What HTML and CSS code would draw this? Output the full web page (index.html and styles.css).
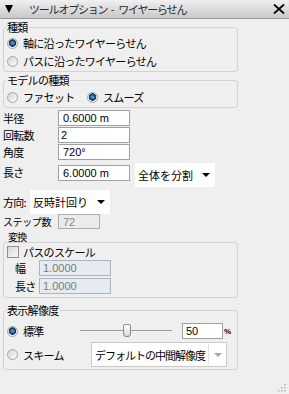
FILE: index.html
```html
<!DOCTYPE html>
<html lang="ja">
<head>
    <meta charset="UTF-8">
    <title>ツールオプション - ワイヤーらせん</title>
    <link rel="stylesheet" href="styles.css">
</head>
<body>
    <div class="panel">
        <div class="titlebar">
            <span class="tri"></span>
            <span class="ttl">ツールオプション<span class="dash"> - </span>ワイヤーらせん</span>
            <svg class="close" width="12" height="10" viewBox="0 0 12 10">
                <path d="M1 0.5 L11 9.5 M11 0.5 L1 9.5" stroke="#000" stroke-width="1.8" fill="none"/>
            </svg>
        </div>
        <div class="content">
            <fieldset class="group">
                <legend>種類</legend>
                <div class="opt"><span class="radio on"></span>軸に沿ったワイヤーらせん</div>
                <div class="opt"><span class="radio"></span>パスに沿ったワイヤーらせん</div>
            </fieldset>
            <fieldset class="group model">
                <legend>モデルの種類</legend>
                <div class="opt-row">
                    <div class="opt w80"><span class="radio"></span>ファセット</div>
                    <div class="opt"><span class="radio on"></span>スムーズ</div>
                </div>
            </fieldset>

            <div class="params">
                <div class="row"><span class="lbl">半径</span><input type="text" class="field" value="0.6000 m"></div>
                <div class="row"><span class="lbl">回転数</span><input type="text" class="field tight" value="2"></div>
                <div class="row"><span class="lbl">角度</span><input type="text" class="field" value="720°"></div>
                <div class="row len">
                    <span class="lbl">長さ</span><input type="text" class="field" value="6.0000 m">
                    <div class="select split">全体を分割<span class="caret"></span></div>
                </div>
                <div class="row dir">
                    <span class="lbl short">方向:</span>
                    <div class="select turn">反時計回り<span class="caret"></span></div>
                </div>
                <div class="row steps">
                    <span class="lbl">ステップ数</span><input type="text" class="field off" value="72" disabled>
                </div>
            </div>

            <div class="sublabel">変換</div>
            <div class="box">
                <div class="check-row"><span class="check"></span>パスのスケール</div>
                <div class="row sub"><span class="lbl2">幅</span><input type="text" class="field dim" value="1.0000" disabled></div>
                <div class="row sub"><span class="lbl2">長さ</span><input type="text" class="field dim" value="1.0000" disabled></div>
            </div>

            <fieldset class="group res">
                <legend>表示解像度</legend>
                <div class="res-row">
                    <div class="opt w71"><span class="radio on"></span>標準</div>
                    <div class="slider">
                        <span class="track"></span>
                        <span class="thumb"></span>
                    </div>
                    <input type="text" class="field pct" value="50">
                    <span class="pct-sign">%</span>
                </div>
                <div class="res-row scheme-row">
                    <div class="opt w84"><span class="radio"></span>スキーム</div>
                    <div class="select scheme">デフォルトの中間解像度<span class="sep"></span><span class="caret grey"></span></div>
                </div>
            </fieldset>
        </div>
        <svg class="grip" width="10" height="10" viewBox="0 0 10 10">
            <rect x="7" y="1" width="1.5" height="1.5" fill="#b5b5b5"/>
            <rect x="4" y="4" width="1.5" height="1.5" fill="#b5b5b5"/>
            <rect x="7" y="4" width="1.5" height="1.5" fill="#b5b5b5"/>
            <rect x="1" y="7" width="1.5" height="1.5" fill="#b5b5b5"/>
            <rect x="4" y="7" width="1.5" height="1.5" fill="#b5b5b5"/>
            <rect x="7" y="7" width="1.5" height="1.5" fill="#b5b5b5"/>
        </svg>
    </div>
</body>
</html>
```

FILE: styles.css
```css
* {
    box-sizing: border-box;
}

body {
    margin: 0;
    background: #efefef;
    font: 11px/14px "Noto Sans CJK JP", sans-serif;
    letter-spacing: -0.7px;
    color: #000;
}

.panel {
    position: relative;
    width: 289px;
    height: 394px;
    background: #efefef;
}

.titlebar {
    display: flex;
    align-items: center;
    height: 19px;
    padding-left: 5px;
    background: linear-gradient(#f0f0f0, #c8c8c8);
    border-bottom: 1px solid #9a9a9a;
}

.tri {
    width: 0;
    height: 0;
    border-left: 4.5px solid transparent;
    border-right: 4.5px solid transparent;
    border-top: 8px solid #000;
}

.ttl {
    margin-left: 16px;
    color: #2a2a2a;
    letter-spacing: -1.2px;
    white-space: pre;
}

.ttl .dash {
    letter-spacing: 0;
    padding: 0 1px;
}

.close {
    margin-left: auto;
    margin-right: 4px;
}

.content {
    width: 241px;
    padding: 0 3px;
}

.group {
    margin: 1px 0 0;
    padding: 0 3px 1px;
    border: 1px solid #d3d3d3;
    border-radius: 3px;
}

.group legend {
    padding: 0 1px;
    margin-left: -1px;
    line-height: 14px;
}

.model .opt-row {
    display: flex;
    margin-top: 1px;
}

.opt {
    display: flex;
    align-items: center;
    height: 18px;
}

.w80 { width: 80px; }
.w71 { width: 71px; }
.w84 { width: 84px; }

.radio {
    flex: none;
    width: 11px;
    height: 11px;
    margin-right: 5px;
    border: 1px solid #a5a5a5;
    border-radius: 50%;
    background: linear-gradient(135deg, #d4d4d4, #fcfcfc);
}

.radio.on {
    background: radial-gradient(circle at 50% 45%, #8cbbe2 0, #2f6ea5 1.5px, #0d3556 3.5px, #dfe3e6 4px, #fff 5px);
}

/* text rows */
.params {
    margin-top: 2px;
}

.row {
    display: flex;
    align-items: center;
}

.row + .row {
    margin-top: 1px;
}

.lbl {
    width: 55px;
    flex: none;
}

.lbl.short {
    width: 27px;
}

.field {
    width: 72px;
    height: 16px;
    margin: 0;
    padding: 0 4px;
    border: 1px solid #a0a0a0;
    background: #fff;
    font: 11px "Liberation Sans", Arial, sans-serif;
    color: #000;
    outline: none;
}

.field.tight {
    padding-left: 2px;
}

.row.len {
    align-items: flex-start;
    height: 24px;
    margin-top: 3px;
}

.row.len .lbl {
    line-height: 18px;
}

.row.len .field {
    margin-top: 2px;
}

.select {
    display: flex;
    align-items: center;
    padding: 0 5px 0 3px;
    background: #fff;
    letter-spacing: 0;
}

.caret {
    margin-left: auto;
    width: 0;
    height: 0;
    border-left: 4px solid transparent;
    border-right: 4px solid transparent;
    border-top: 4px solid #000;
}

.caret.grey {
    margin-left: 0;
    border-top-color: #a8a8a8;
}

.select.split {
    width: 80px;
    height: 24px;
    margin-left: 5px;
}

.row.dir {
    margin-top: 3px;
}

.select.turn {
    width: 80px;
    height: 24px;
}

.row.steps {
    margin-top: 0;
}

.row.steps .lbl {
    font-size: 10px;
    line-height: 12px;
    letter-spacing: -0.4px;
}

.field.off {
    width: 42px;
    height: 15px;
    background: #ebebeb;
    border-color: #acacac;
    color: #8c8c8c;
    padding-left: 4px;
}

/* transform */
.sublabel {
    height: 13px;
    padding: 2px 0 0 5px;
    font-size: 10px;
    line-height: 11px;
}

.box {
    padding: 2px 3px 3px;
    border: 1px solid #d3d3d3;
    border-radius: 3px;
}

.check-row {
    display: flex;
    align-items: center;
    height: 14px;
}

.check {
    width: 12px;
    height: 12px;
    margin-right: 4px;
    border: 1px solid #8e8e8e;
    background: linear-gradient(135deg, #d8d8d8, #f8f8f8);
}

.row.sub {
    margin-top: 1px;
}

.row.sub + .row.sub {
    margin-top: 2px;
}

.lbl2 {
    width: 32px;
    padding-left: 8px;
}

.field.dim {
    background: #e6ebf1;
    border-color: #a9b3c1;
    color: #7a7a7a;
    padding-left: 3px;
}

/* resolution */
.group.res {
    margin-top: 5px;
    padding-bottom: 2px;
}

.res-row {
    display: flex;
    align-items: center;
    height: 18px;
    margin-top: 5px;
}

.slider {
    position: relative;
    width: 95px;
    height: 18px;
}

.track {
    position: absolute;
    left: 2px;
    right: 1px;
    top: 8px;
    height: 1px;
    background: #9c9c9c;
}

.thumb {
    position: absolute;
    left: 45px;
    top: 2px;
    width: 8px;
    height: 13px;
    border: 1px solid #8a8a8a;
    border-radius: 2px 2px 3px 3px;
    background: linear-gradient(#ffffff, #d6d6d6);
}

.field.pct {
    width: 41px;
    margin-left: 9px;
    padding-left: 3px;
}

.pct-sign {
    margin-left: 1px;
    font: bold 8px "Liberation Sans", sans-serif;
}

.res-row.scheme-row {
    height: 25px;
    margin-top: 2px;
}

.select.scheme {
    width: 136px;
    height: 25px;
    border: 1px solid #cacaca;
    letter-spacing: -1px;
    padding-right: 4px;
}

.sep {
    margin-left: auto;
    margin-right: 5px;
    width: 1px;
    height: 21px;
    background: #e2e2e2;
}

.grip {
    position: absolute;
    right: 2px;
    bottom: 1px;
}
```
